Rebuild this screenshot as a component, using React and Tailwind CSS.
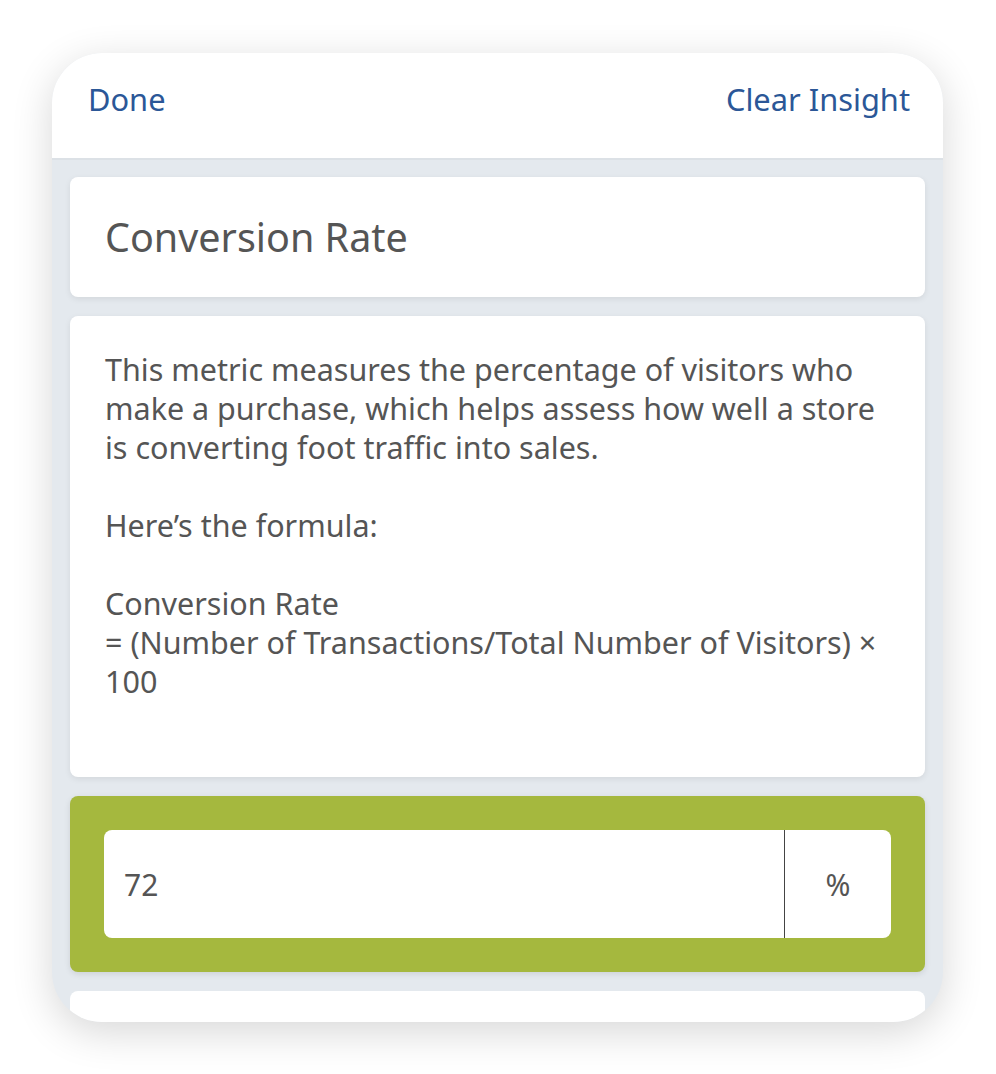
export default function App() {
  const font = { fontFamily: '"Noto Sans", "Open Sans", sans-serif' };
  return (
    <div className="w-[996px] h-[1074px] bg-white pt-[53px] pl-[52px]" style={font}>
      <div className="w-[891px] h-[969px] rounded-[50px] overflow-hidden bg-[#e4e9ee] shadow-[0_10px_40px_rgba(0,0,0,0.16)] flex flex-col">
        <div className="h-[107px] shrink-0 bg-white border-b-2 border-[#dce1e6] flex justify-between items-start pt-[25px] pl-[36px] pr-[33px]">
          <span className="text-[30.8px] leading-[1.4] text-[#2b5797]">Done</span>
          <span className="text-[30.8px] leading-[1.4] text-[#2b5797]">Clear Insight</span>
        </div>
        <div className="flex flex-col gap-[19px] px-[18px] pt-[17px]">
          <div className="h-[120px] bg-white rounded-[8px] shadow-[0_2px_6px_rgba(0,0,0,0.08)] flex items-center pt-[2px] px-[35px]">
            <span className="text-[39.5px] leading-[1.3] text-[#555555]">Conversion Rate</span>
          </div>
          <div className="h-[461px] bg-white rounded-[8px] shadow-[0_2px_6px_rgba(0,0,0,0.08)] pt-[34px] pl-[35px] pr-[30px] text-[30.5px] leading-[39px] text-[#555555]">
            <p>This metric measures the percentage of visitors who make a purchase, which helps assess how well a store is converting foot traffic into sales.</p>
            <p className="mt-[39px]">Here’s the formula:</p>
            <p className="mt-[39px]">Conversion Rate</p>
            <p>= (Number of Transactions/Total Number of Visitors) × 100</p>
          </div>
          <div className="h-[176px] bg-[#a5b83e] rounded-[8px] shadow-[0_2px_6px_rgba(0,0,0,0.1)] p-[34px]">
            <div className="h-[108px] bg-white rounded-[8px] flex">
              <div className="flex-1 flex items-center pl-[20px] text-[30px] text-[#555555] border-r border-[#444444]">72</div>
              <div className="w-[106px] flex items-center justify-center text-[30px] text-[#555555]">%</div>
            </div>
          </div>
          <div className="h-[80px] bg-white rounded-[8px] shrink-0"></div>
        </div>
      </div>
    </div>
  );
}
